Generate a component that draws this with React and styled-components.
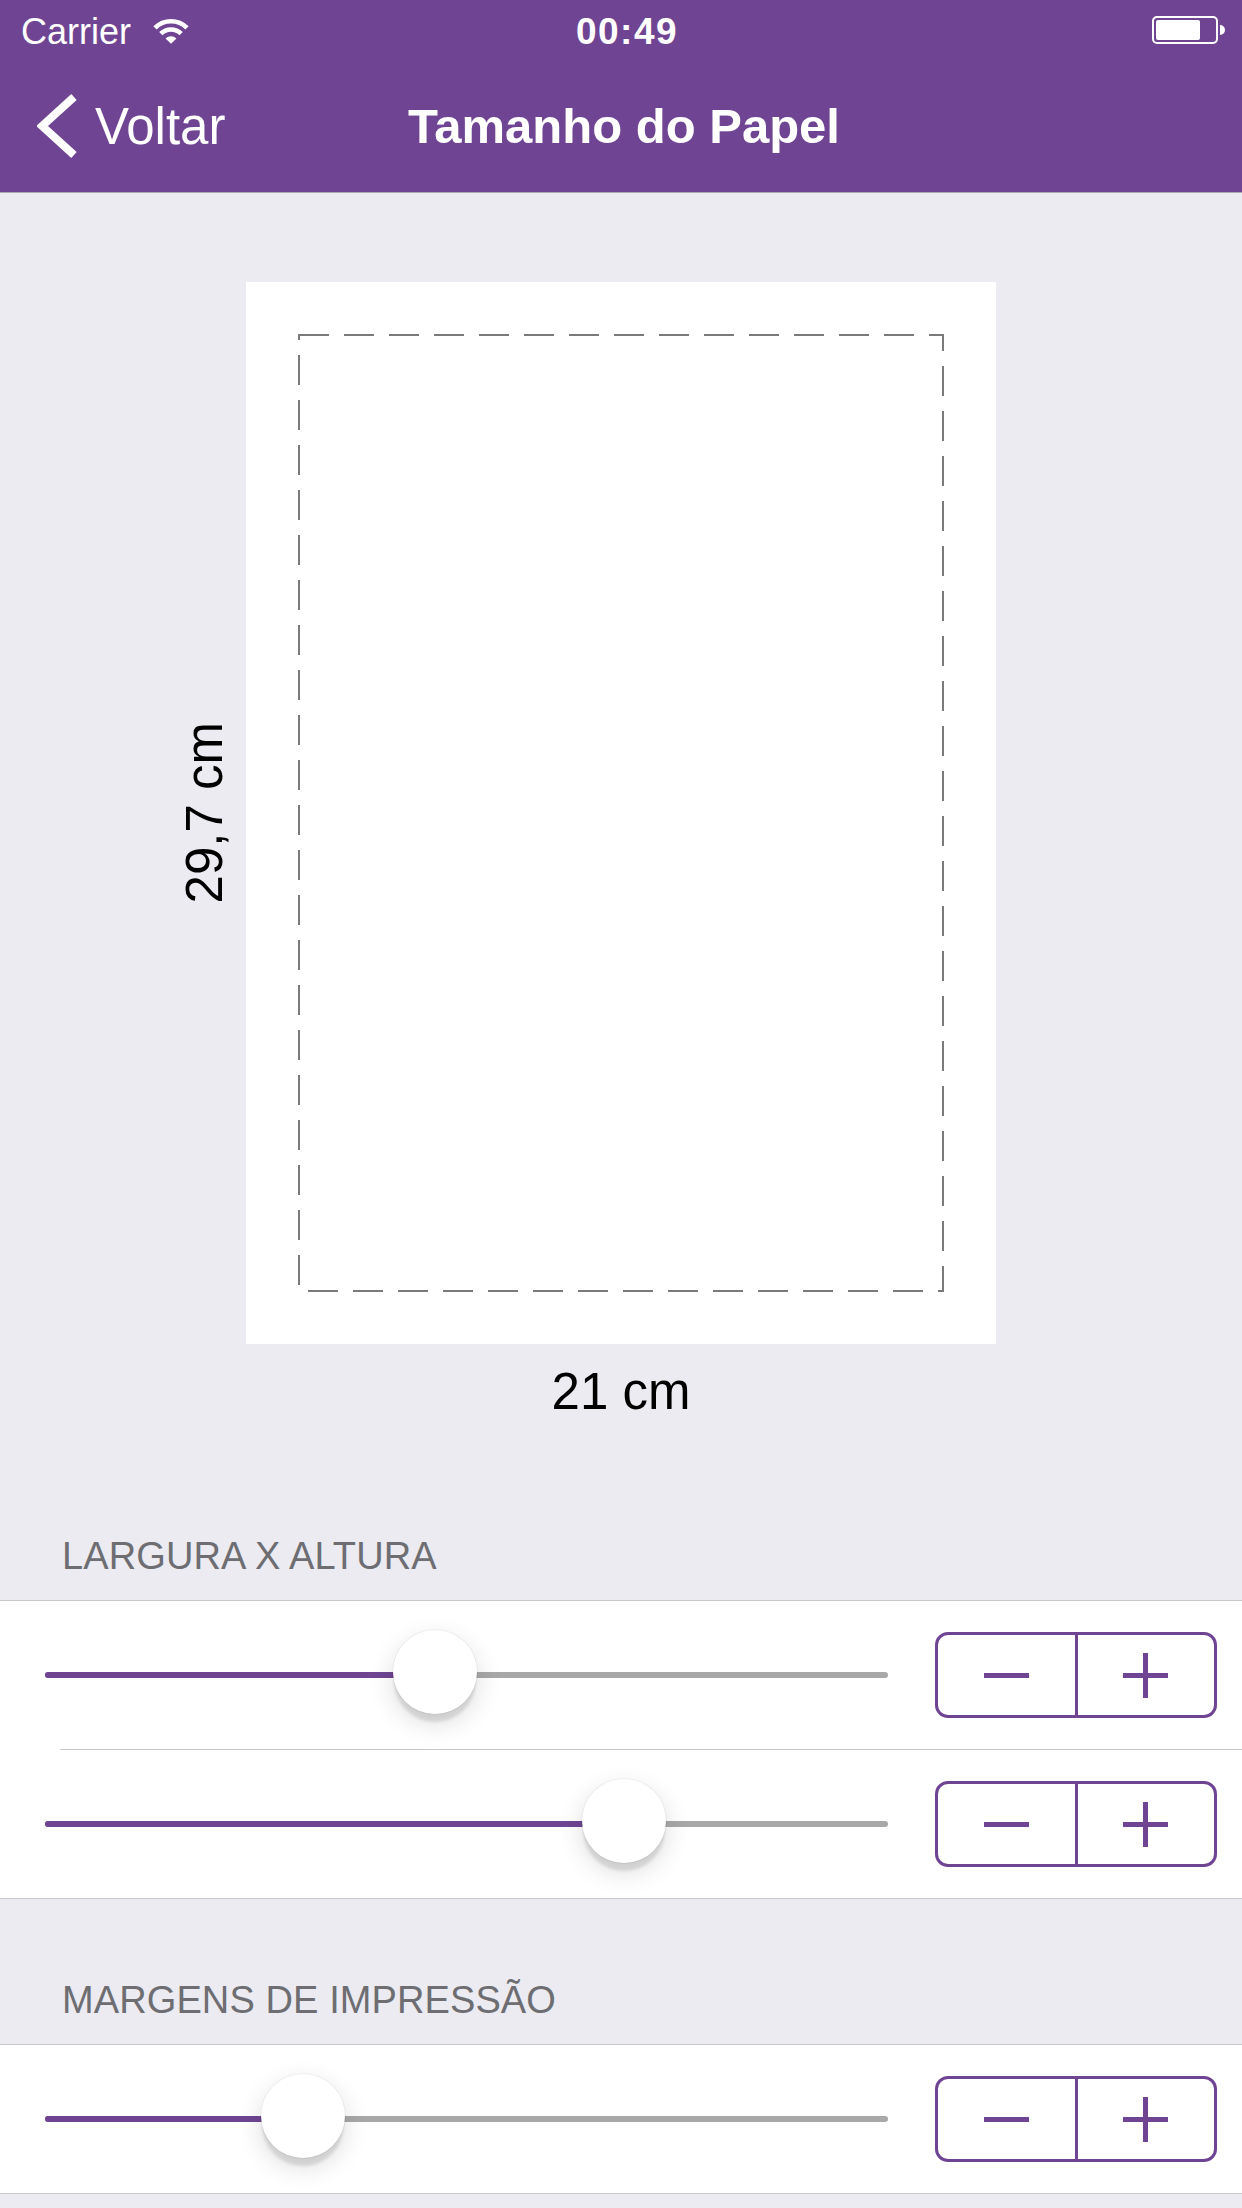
import styled, { createGlobalStyle } from 'styled-components';

const purple = '#6f4593';
const hairline = '#c8c7cc';

const GlobalStyle = createGlobalStyle`
  html, body {
    margin: 0;
    padding: 0;
    background: #ebebf1;
  }
  body {
    font-family: "Liberation Sans", Arial, sans-serif;
    -webkit-font-smoothing: antialiased;
  }
`;

const Screen = styled.div`
  width: 1242px;
  min-height: 2208px;
  overflow: hidden;
  background: #ebebf1;
  display: flex;
  flex-direction: column;
`;

const Header = styled.header`
  background: ${purple};
  color: white;
  border-bottom: 1px solid #a9a9ae;
`;

const StatusBar = styled.div`
  box-sizing: border-box;
  height: 60px;
  display: grid;
  grid-template-columns: 1fr auto 1fr;
  align-items: center;
  padding: 3px 17px 0 21px;
  font-size: 36px;
`;

const Carrier = styled.div`
  display: flex;
  align-items: center;
  gap: 22px;
`;

const Clock = styled.div`
  font-weight: 700;
  font-size: 37px;
  letter-spacing: 1.5px;
  padding-left: 8px;
`;

const Battery = styled.div`
  justify-self: end;
  display: flex;
  align-items: center;
  margin-top: -3px;
`;

const BatteryBody = styled.div`
  box-sizing: border-box;
  width: 66px;
  height: 28px;
  border: 2px solid white;
  border-radius: 5px;
  padding: 2px;
  display: flex;
`;

const BatteryLevel = styled.div`
  background: white;
  border-radius: 2px;
  height: 100%;
`;

const BatteryNub = styled.div`
  width: 5px;
  height: 10px;
  margin-left: 2px;
  background: white;
  border-radius: 0 5px 5px 0;
`;

const NavBar = styled.div`
  height: 132px;
  display: grid;
  grid-template-columns: 1fr auto 1fr;
  align-items: center;
`;

const BackButton = styled.div`
  display: flex;
  align-items: center;
  gap: 18px;
  padding-left: 37px;
  font-size: 51px;
`;

const Title = styled.h1`
  margin: 0;
  font-size: 49px;
  font-weight: 700;
  padding-left: 6px;
`;

const Preview = styled.div`
  display: grid;
  grid-template-columns: 1fr auto 1fr;
  padding: 89px 0 38px;
`;

const HeightLabel = styled.div`
  grid-column: 1;
  justify-self: end;
  align-self: center;
  margin-right: 16px;
  writing-mode: vertical-rl;
  transform: rotate(180deg);
  font-size: 51px;
  line-height: 51px;
  color: #000;
`;

const Paper = styled.div`
  grid-column: 2;
  box-sizing: border-box;
  width: 750px;
  height: 1062px;
  padding: 52px;
  background: white;
  display: flex;
`;

const WidthLabel = styled.div`
  grid-column: 2;
  margin-top: 22px;
  text-align: center;
  font-size: 51px;
  line-height: 51px;
  color: #000;
`;

const SectionHeader = styled.div`
  padding: 82px 0 24px 62px;
  font-size: 38px;
  line-height: 39px;
  color: #6d6d72;
  text-transform: uppercase;
  letter-spacing: 0.1px;
`;

const Group = styled.div`
  background: white;
  border-top: 1px solid ${hairline};
  border-bottom: 1px solid ${hairline};
`;

const Divider = styled.div`
  height: 1px;
  margin-left: 60px;
  background: ${hairline};
`;

const Row = styled.div`
  height: 148px;
  display: flex;
  align-items: center;
  gap: 47px;
  padding: 0 25px 0 45px;
`;

const Slider = styled.div`
  position: relative;
  flex: 1;
  height: 84px;
  display: flex;
  align-items: center;
`;

const Track = styled.div`
  width: 100%;
  height: 6px;
  border-radius: 3px;
  background: #a8a8a8;
  display: flex;
`;

const Fill = styled.div`
  height: 100%;
  border-radius: 3px 0 0 3px;
  background: ${purple};
`;

const Thumb = styled.div`
  position: absolute;
  top: -3px;
  width: 84px;
  height: 84px;
  border-radius: 50%;
  background: white;
  box-shadow: 0 0 0 1px rgba(0, 0, 0, 0.04), 0 9px 3px -1px rgba(0, 0, 0, 0.1),
    0 9px 26px rgba(0, 0, 0, 0.14);
`;

const Stepper = styled.div`
  box-sizing: border-box;
  width: 282px;
  height: 86px;
  border: 3px solid ${purple};
  border-radius: 13px;
  display: flex;
`;

const StepButton = styled.div`
  flex: 1;
  display: flex;
  align-items: center;
  justify-content: center;
  & + & {
    border-left: 3px solid ${purple};
  }
`;

const WifiIcon = () => (
  <svg width="36" height="27" viewBox="0 0 35 26">
    <path
      d="M1.94 9.44 A22 22 0 0 1 33.06 9.44"
      fill="none"
      stroke="white"
      strokeWidth="4.5"
    />
    <path
      d="M7.6 15.1 A14 14 0 0 1 27.4 15.1"
      fill="none"
      stroke="white"
      strokeWidth="4.5"
    />
    <path d="M17.5 25 L12.2 19.7 A7.5 7.5 0 0 1 22.8 19.7 Z" fill="white" />
  </svg>
);

const Chevron = () => (
  <svg width="40" height="64" viewBox="0 0 40 64">
    <path
      d="M37 3 L5 32 L37 61"
      fill="none"
      stroke="white"
      strokeWidth="8"
      strokeLinejoin="miter"
    />
  </svg>
);

const MinusIcon = () => (
  <svg width="45" height="45" viewBox="0 0 45 45">
    <rect x="0" y="20" width="45" height="5" fill={purple} />
  </svg>
);

const PlusIcon = () => (
  <svg width="45" height="45" viewBox="0 0 45 45">
    <rect x="0" y="20" width="45" height="5" fill={purple} />
    <rect x="20" y="0" width="5" height="45" fill={purple} />
  </svg>
);

const SliderRow = ({ value }) => (
  <Row>
    <Slider>
      <Track>
        <Fill style={{ width: `calc(${value} * (100% - 84px) + 42px)` }} />
      </Track>
      <Thumb style={{ left: `calc(${value} * (100% - 84px))` }} />
    </Slider>
    <Stepper>
      <StepButton>
        <MinusIcon />
      </StepButton>
      <StepButton>
        <PlusIcon />
      </StepButton>
    </Stepper>
  </Row>
);

const App = () => {
  return (
    <>
      <GlobalStyle />
      <Screen>
        <Header>
          <StatusBar>
            <Carrier>
              Carrier
              <WifiIcon />
            </Carrier>
            <Clock>00:49</Clock>
            <Battery>
              <BatteryBody>
                <BatteryLevel style={{ width: '75%' }} />
              </BatteryBody>
              <BatteryNub />
            </Battery>
          </StatusBar>
          <NavBar>
            <BackButton>
              <Chevron />
              Voltar
            </BackButton>
            <Title>Tamanho do Papel</Title>
            <div />
          </NavBar>
        </Header>

        <Preview>
          <HeightLabel>29,7 cm</HeightLabel>
          <Paper>
            <svg width="646" height="958" viewBox="0 0 646 958">
              <rect
                x="1"
                y="1"
                width="644"
                height="956"
                fill="none"
                stroke="#7a7a7a"
                strokeWidth="2"
                strokeDasharray="30 15"
              />
            </svg>
          </Paper>
          <WidthLabel>21 cm</WidthLabel>
        </Preview>

        <SectionHeader>Largura x Altura</SectionHeader>
        <Group>
          <SliderRow value={0.458} />
          <Divider />
          <SliderRow value={0.707} />
        </Group>

        <SectionHeader>Margens de impressão</SectionHeader>
        <Group>
          <SliderRow value={0.285} />
        </Group>
      </Screen>
    </>
  );
};

export default App;
